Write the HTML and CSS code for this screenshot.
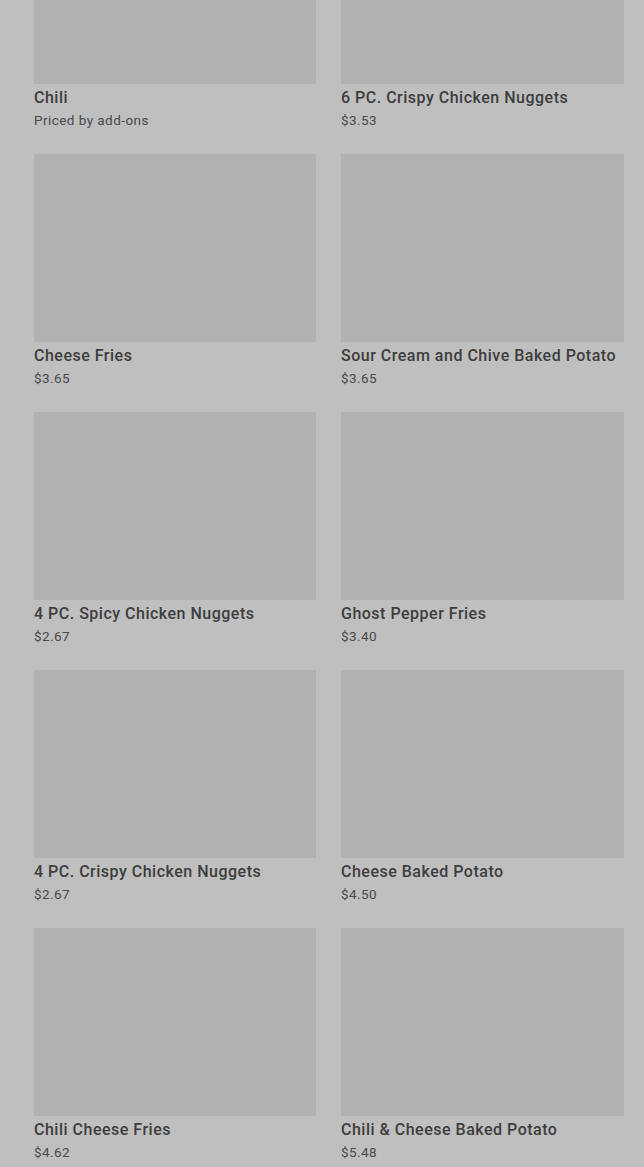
FILE: index.html
```html
<!DOCTYPE html>
<html lang="en">
<head>
    <meta charset="UTF-8">
    <meta name="viewport" content="width=device-width, initial-scale=1.0">
    <title>Menu</title>
    <link rel="stylesheet" href="styles.css">
</head>
<body>
    <main class="menu-grid">
        <div class="item">
            <div class="item-img"></div>
            <div class="item-name">Chili</div>
            <div class="item-price">Priced by add-ons</div>
        </div>
        <div class="item">
            <div class="item-img"></div>
            <div class="item-name">6 PC. Crispy Chicken Nuggets</div>
            <div class="item-price">$3.53</div>
        </div>
        <div class="item">
            <div class="item-img"></div>
            <div class="item-name">Cheese Fries</div>
            <div class="item-price">$3.65</div>
        </div>
        <div class="item">
            <div class="item-img"></div>
            <div class="item-name">Sour Cream and Chive Baked Potato</div>
            <div class="item-price">$3.65</div>
        </div>
        <div class="item">
            <div class="item-img"></div>
            <div class="item-name">4 PC. Spicy Chicken Nuggets</div>
            <div class="item-price">$2.67</div>
        </div>
        <div class="item">
            <div class="item-img"></div>
            <div class="item-name">Ghost Pepper Fries</div>
            <div class="item-price">$3.40</div>
        </div>
        <div class="item">
            <div class="item-img"></div>
            <div class="item-name">4 PC. Crispy Chicken Nuggets</div>
            <div class="item-price">$2.67</div>
        </div>
        <div class="item">
            <div class="item-img"></div>
            <div class="item-name">Cheese Baked Potato</div>
            <div class="item-price">$4.50</div>
        </div>
        <div class="item">
            <div class="item-img"></div>
            <div class="item-name">Chili Cheese Fries</div>
            <div class="item-price">$4.62</div>
        </div>
        <div class="item">
            <div class="item-img"></div>
            <div class="item-name">Chili &amp; Cheese Baked Potato</div>
            <div class="item-price">$5.48</div>
        </div>
    </main>
</body>
</html>
```

FILE: styles.css
```css
body {
    margin: 0;
    padding: 0;
    background-color: #bfbfbf;
    font-family: Roboto, "Liberation Sans", Arial, sans-serif;
    overflow: hidden;
}
.menu-grid {
    display: grid;
    grid-template-columns: 282px 283px;
    column-gap: 25px;
    row-gap: 24px;
    margin-top: -104px;
    padding-left: 34px;
}
.item-img {
    height: 188px;
    background-color: #b1b1b1;
}
.item-name {
    margin-top: 3px;
    line-height: 22px;
    font-size: 16px;
    font-weight: 500;
    letter-spacing: 0.5px;
    color: #3d3d3d;
    white-space: nowrap;
}
.item-price {
    margin-top: 1px;
    line-height: 20px;
    font-size: 13.5px;
    letter-spacing: 0.45px;
    color: #494949;
}
```
